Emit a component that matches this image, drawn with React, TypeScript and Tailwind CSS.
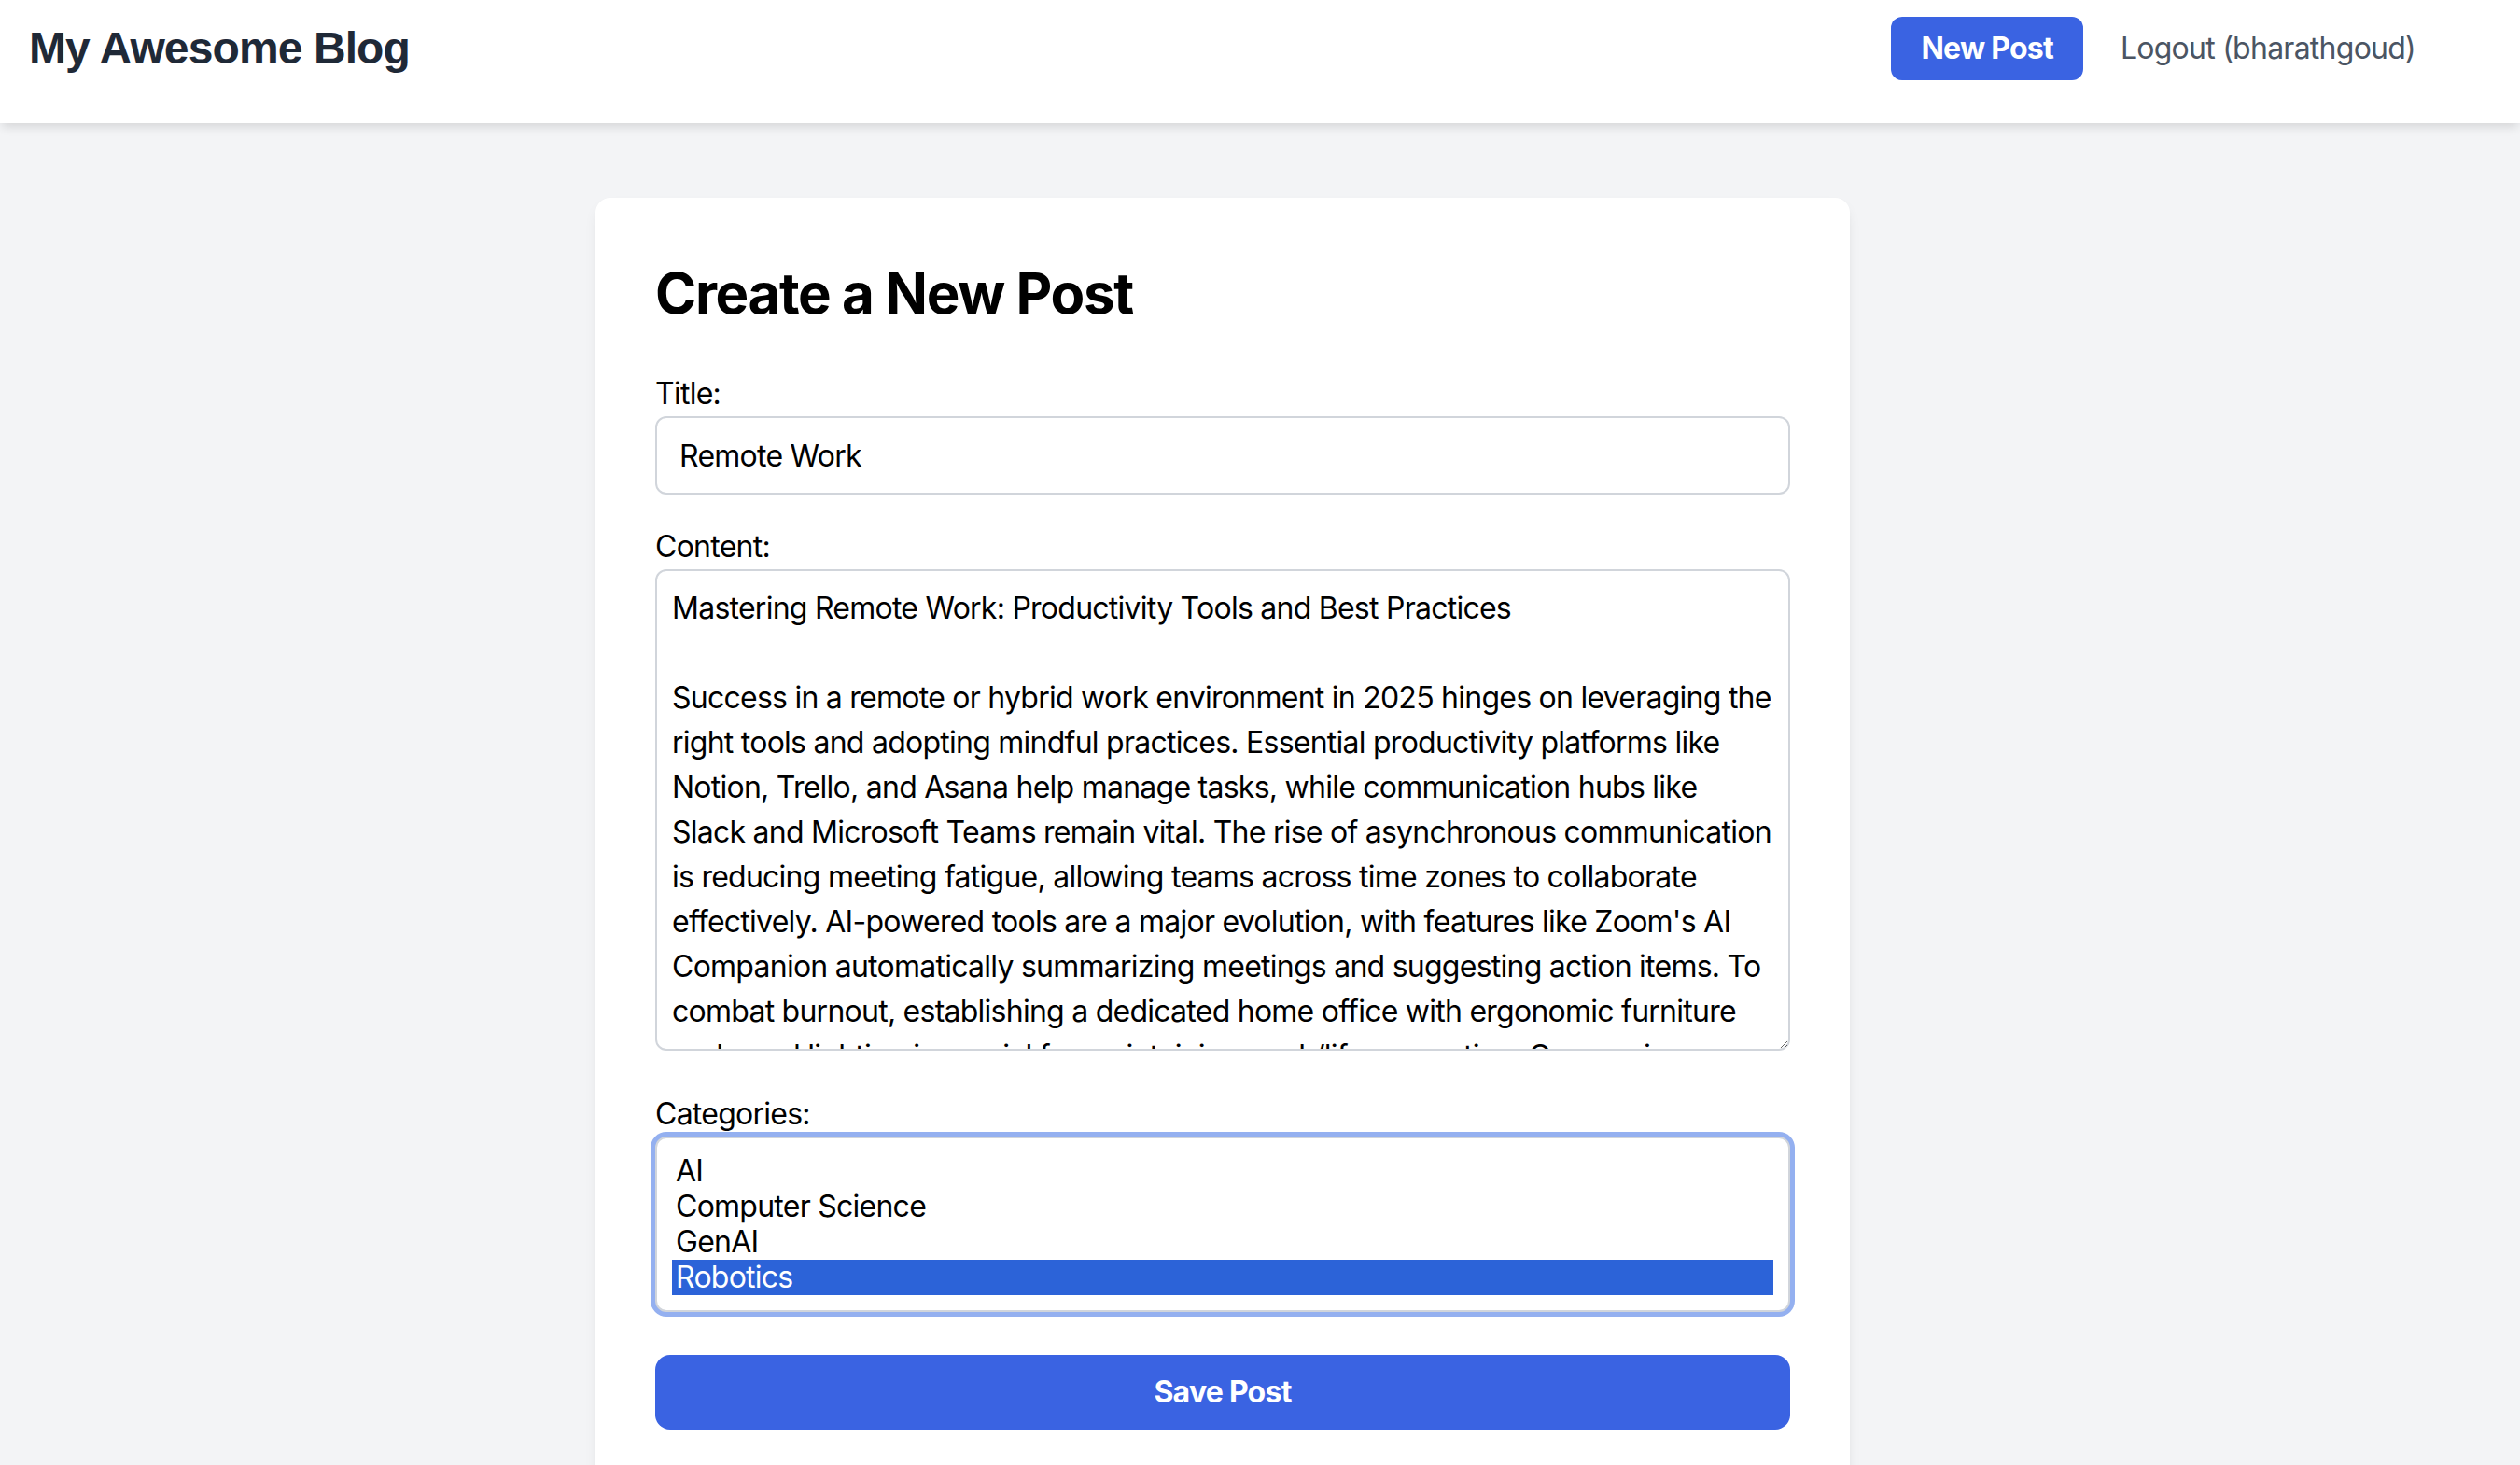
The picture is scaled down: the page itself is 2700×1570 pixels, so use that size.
import React from 'react';

// line breaks placed where the reference textarea wraps
const contentLines = [
  'Mastering Remote Work: Productivity Tools and Best Practices',
  '',
  'Success in a remote or hybrid work environment in 2025 hinges on leveraging the',
  'right tools and adopting mindful practices. Essential productivity platforms like',
  'Notion, Trello, and Asana help manage tasks, while communication hubs like',
  'Slack and Microsoft Teams remain vital. The rise of asynchronous communication',
  'is reducing meeting fatigue, allowing teams across time zones to collaborate',
  "effectively. AI-powered tools are a major evolution, with features like Zoom's AI",
  'Companion automatically summarizing meetings and suggesting action items. To',
  'combat burnout, establishing a dedicated home office with ergonomic furniture',
  'and good lighting is crucial for maintaining work/life separation. Companies are',
  'also investing in virtual team-building and regular check-ins to keep remote',
  'employees engaged.',
];

const categories = ['AI', 'Computer Science', 'GenAI', 'Robotics'];

const Header: React.FC = () => (
  <header className="bg-white shadow-[0_6px_10px_-2px_rgba(0,0,0,0.12)] pt-[18px] pb-[46px] pl-[31px] pr-[112px] relative z-10">
    <div className="flex items-center justify-between h-[68px]">
      <h1 className="font-['Liberation_Sans',Arial,sans-serif] font-bold text-[48px] leading-[64px] tracking-[-0.9px] text-[#1f2937]">
        My Awesome Blog
      </h1>
      <nav className="flex items-center gap-[40px]">
        <button className="h-[68px] px-[32px] rounded-[12px] bg-[#3a63e2] text-white text-[32px] font-bold">
          New Post
        </button>
        <span className="text-[32px] leading-[48px] text-[#4b5563]">Logout (bharathgoud)</span>
      </nav>
    </div>
  </header>
);

export default function App() {
  return (
    <div className="min-h-[1570px] bg-[#f3f4f6] font-['Inter','Noto_Sans',sans-serif] tracking-[-0.75px] text-black">
      <Header />
      <main className="pt-[80px] pl-[638px]">
        <div className="w-[1344px] rounded-[16px] bg-white px-[64px] pt-[66px] pb-[64px] shadow-[0_8px_16px_-4px_rgba(0,0,0,0.1),0_4px_8px_-4px_rgba(0,0,0,0.06)]">
          <h2 className="text-[60px] leading-[72px] font-bold tracking-[-1.4px] text-black mb-[48px]">Create a New Post</h2>

          <div className="mb-[32px]">
            <label className="block text-[32px] leading-[48px]">Title:</label>
            <input
              type="text"
              defaultValue="Remote Work"
              className="block w-full h-[84px] px-[24px] border-2 border-[#d1d5db] rounded-[12px] text-[32px] leading-[48px] text-black bg-white"
            />
          </div>

          <div className="mb-[44px]">
            <label className="block text-[32px] leading-[48px]">Content:</label>
            <textarea
              rows={10}
              wrap="off"
              defaultValue={contentLines.join('\n')}
              className="block w-full h-[516px] p-[16px] border-2 border-[#d1d5db] rounded-[12px] text-[32px] leading-[48px] text-black bg-white overflow-hidden whitespace-pre resize-y"
            />
          </div>

          <div className="mb-[46px]">
            <label className="block text-[32px] leading-[48px]">Categories:</label>
            <div
              role="listbox"
              aria-multiselectable="true"
              className="border-2 border-[#d1d5db] rounded-[12px] p-[16px] bg-white shadow-[0_0_0_5px_#94b0f0]"
            >
              {categories.map((c) => (
                <div
                  key={c}
                  role="option"
                  aria-selected={c === 'Robotics'}
                  className={
                    c === 'Robotics'
                      ? 'h-[38px] leading-[38px] px-[4px] text-[32px] bg-[#2c63d8] text-white'
                      : 'h-[38px] leading-[38px] px-[4px] text-[32px] text-black'
                  }
                >
                  {c}
                </div>
              ))}
            </div>
          </div>

          <button className="w-full h-[80px] rounded-[16px] bg-[#3a63e2] text-white text-[32px] font-bold">
            Save Post
          </button>
        </div>
      </main>
    </div>
  );
}
